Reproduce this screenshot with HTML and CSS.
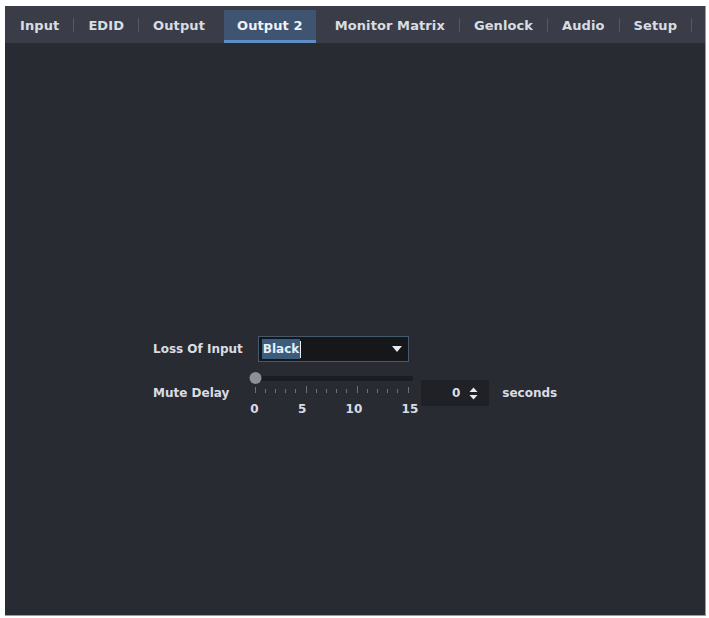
FILE: index.html
```html
<!DOCTYPE html>
<html>
<head>
<meta charset="utf-8">
<link rel="stylesheet" href="styles.css">
</head>
<body>
<div class="panel">
  <div class="tabbar">
    <div class="tab">Input</div><span class="sep"></span>
    <div class="tab">EDID</div><span class="sep"></span>
    <div class="tab">Output</div><span class="sep sep-hidden"></span>
    <div class="tab active">Output 2</div><span class="sep sep-hidden"></span>
    <div class="tab">Monitor Matrix</div><span class="sep"></span>
    <div class="tab">Genlock</div><span class="sep"></span>
    <div class="tab">Audio</div><span class="sep"></span>
    <div class="tab">Setup</div><span class="sep"></span>
  </div>
  <div class="content">
    <div class="form">
      <div class="row row-loss">
        <span class="label">Loss Of Input</span>
        <div class="select">
          <span class="sel-text">Black</span><span class="cursor"></span>
          <svg class="caret" width="10" height="6" viewBox="0 0 10 6"><path d="M0 0 L10 0 L5 6 Z" fill="#e8ecf0"/></svg>
        </div>
      </div>
      <div class="row row-mute">
        <span class="label">Mute Delay</span>
        <div class="slider">
          <svg width="170" height="22" viewBox="0 0 170 22">
            <rect x="8" y="4" width="156" height="5" rx="2" fill="#1b1d22"/>
            <g stroke="#6c7078" stroke-width="1">
              <line x1="6.5" y1="15" x2="6.5" y2="21"/>
              <line x1="16.5" y1="17" x2="16.5" y2="21"/>
              <line x1="26.5" y1="17" x2="26.5" y2="21"/>
              <line x1="36.5" y1="17" x2="36.5" y2="21"/>
              <line x1="46.5" y1="17" x2="46.5" y2="21"/>
              <line x1="57.5" y1="14" x2="57.5" y2="21"/>
              <line x1="67.5" y1="17" x2="67.5" y2="21"/>
              <line x1="77.5" y1="17" x2="77.5" y2="21"/>
              <line x1="87.5" y1="17" x2="87.5" y2="21"/>
              <line x1="97.5" y1="17" x2="97.5" y2="21"/>
              <line x1="108.5" y1="14" x2="108.5" y2="21"/>
              <line x1="118.5" y1="17" x2="118.5" y2="21"/>
              <line x1="128.5" y1="17" x2="128.5" y2="21"/>
              <line x1="138.5" y1="17" x2="138.5" y2="21"/>
              <line x1="148.5" y1="17" x2="148.5" y2="21"/>
              <line x1="159.5" y1="15" x2="159.5" y2="21"/>
            </g>
            <circle cx="6.5" cy="6" r="6" fill="#8d9096"/>
          </svg>
          <div class="scale">
            <span>0</span><span>5</span><span>10</span><span>15</span>
          </div>
        </div>
        <div class="spin">
          <span class="spin-val">0</span>
          <svg class="spin-arrows" width="9" height="13" viewBox="0 0 9 13"><path d="M0.5 5 L4.5 0.5 L8.5 5 Z M0.5 8 L4.5 12.5 L8.5 8 Z" fill="#e8ecf0"/></svg>
        </div>
        <span class="unit">seconds</span>
      </div>
    </div>
  </div>
</div>
</body>
</html>
```
FILE: styles.css
```css
html, body {
  margin: 0;
  padding: 0;
  background: #ffffff;
}
body {
  font-family: "DejaVu Sans", "Liberation Sans", sans-serif;
  font-size: 12px;
  font-weight: bold;
  color: #d9dde3;
}
.panel {
  margin: 6px 3px 0 5px;
  height: 609px;
  display: flex;
  flex-direction: column;
  background: #2a2c34;
  border-right: 1px solid #9a9ca0;
  border-bottom: 1px solid #9a9ca0;
}
.tabbar {
  height: 37px;
  flex: 0 0 37px;
  background: #3a3d48;
  display: flex;
  align-items: stretch;
  padding-left: 1px;
}
.tab {
  display: flex;
  align-items: center;
  padding: 0 14px;
  padding-top: 2px;
  white-space: nowrap;
  font-size: 13px;
  letter-spacing: 0.1px;
}
.tab.active {
  margin-top: 4px;
  padding-top: 0;
  padding-left: 13px;
  padding-right: 13px;
  background: #3e5470;
  color: #eef2f6;
  border-bottom: 3px solid #5d8fc4;
}
.sep {
  width: 1px;
  align-self: center;
  height: 14px;
  background: #555964;
}
.sep-hidden {
  background: transparent;
  width: 5px;
}
.content {
  flex: 1;
  display: flex;
  background: #292b33;
}
.form {
  padding: 293px 0 0 148px;
  display: flex;
  flex-direction: column;
}
.row {
  display: flex;
  align-items: flex-start;
}
.row-loss {
  align-items: center;
  height: 26px;
}
.row-loss .label {
  margin-right: 15px;
}
.select {
  width: 146px;
  height: 24px;
  background: #15171b;
  border: 1px solid #44596a;
  display: flex;
  align-items: center;
  padding-left: 3px;
  box-sizing: content-box;
}
.sel-text {
  background: #3b5c7c;
  color: #e6edf4;
  padding: 2px 1px 2px 1px;
  line-height: 16px;
}
.cursor {
  width: 1px;
  height: 17px;
  background: #e6edf4;
}
.caret {
  margin-left: auto;
  margin-right: 6px;
}
.row-mute {
  margin-top: 10px;
}
.row-mute .label {
  margin-top: 14px;
  margin-right: 20px;
}
.slider {
  width: 170px;
  display: flex;
  flex-direction: column;
}
.slider svg {
  display: block;
}
.scale {
  display: flex;
  justify-content: space-between;
  width: 168px;
  margin-left: 1px;
  margin-top: 8px;
  font-size: 12px;
  line-height: 14px;
}
.spin {
  margin-left: 2px;
  margin-top: 8px;
  width: 68px;
  height: 26px;
  background: #1f2126;
  display: flex;
  align-items: center;
  justify-content: flex-end;
  padding-right: 11px;
  box-sizing: border-box;
}
.spin-val {
  margin-right: 9px;
}
.unit {
  margin-left: 13px;
  margin-top: 14px;
}
```
